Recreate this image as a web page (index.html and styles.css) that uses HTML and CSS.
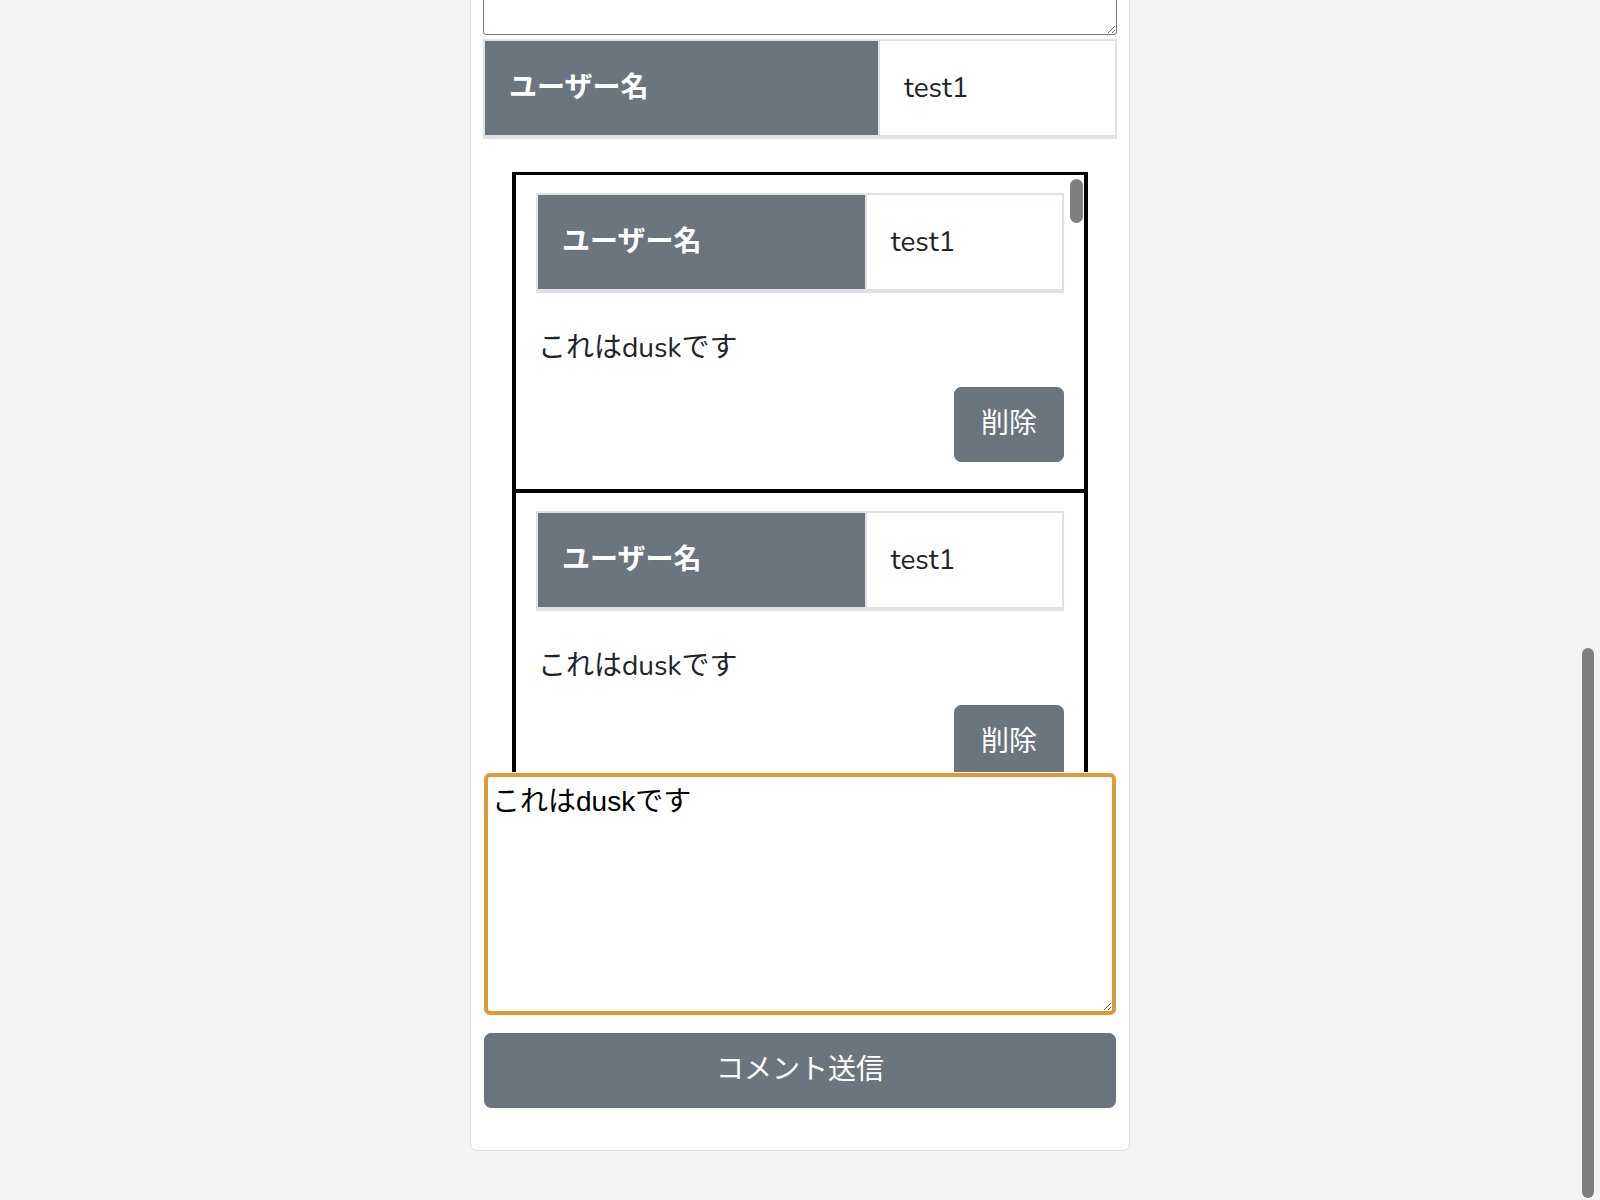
FILE: index.html
```html
<!DOCTYPE html>
<html lang="ja">
<head>
    <meta charset="UTF-8">
    <meta name="viewport" content="width=device-width, initial-scale=1.0">
    <title>投稿詳細</title>
    <link rel="stylesheet" href="styles.css">
</head>
<body>
    <div class="container">
        <div class="card">
            <div class="card-body">
                <h2 class="post-heading">投稿詳細</h2>
                <table class="info-table">
                    <tr><th>タイトル</th><td>テスト</td></tr>
                </table>
                <textarea class="post-body" readonly>これはテスト投稿です</textarea>
                <table class="info-table">
                    <tr><th>ユーザー名</th><td>test1</td></tr>
                </table>

                <div class="comment-box">
                    <div class="comment-list">
                        <div class="comment">
                            <table class="info-table">
                                <tr><th>ユーザー名</th><td>test1</td></tr>
                            </table>
                            <p class="comment-text">これはduskです</p>
                            <div class="comment-actions">
                                <button class="delete-btn">削除</button>
                            </div>
                        </div>
                        <div class="comment">
                            <table class="info-table">
                                <tr><th>ユーザー名</th><td>test1</td></tr>
                            </table>
                            <p class="comment-text">これはduskです</p>
                            <div class="comment-actions">
                                <button class="delete-btn">削除</button>
                            </div>
                        </div>
                        <div class="comment">
                            <table class="info-table">
                                <tr><th>ユーザー名</th><td>test1</td></tr>
                            </table>
                            <p class="comment-text">これはduskです</p>
                            <div class="comment-actions">
                                <button class="delete-btn">削除</button>
                            </div>
                        </div>
                    </div>
                    <div class="list-thumb"></div>
                </div>

                <form class="comment-form" id="commentForm">
                    <textarea class="comment-input" id="commentInput" name="comment">これはduskです</textarea>
                    <button type="submit" class="submit-btn">コメント送信</button>
                </form>
            </div>
        </div>
    </div>
    <div class="page-thumb"></div>

    <script src="script.js"></script>
</body>
</html>
```

FILE: styles.css
```css
html {
    scrollbar-width: none;
}
html::-webkit-scrollbar {
    display: none;
}
body {
    margin: 0;
    padding: 0;
    background-color: #f4f4f4;
    font-family: "Nunito", "Noto Sans", "Noto Sans CJK JP", sans-serif;
    font-size: 28px;
    line-height: 1.5;
    color: #212529;
}
.container {
    padding: 40px 0 49px;
}
.card {
    width: 660px;
    margin: 0 auto;
    box-sizing: border-box;
    background-color: #ffffff;
    border: 1px solid #dcdcdc;
    border-radius: 7px;
}
.card-body {
    padding: 24px 12px 42px;
}
.post-heading {
    margin: 0 0 24px;
    font-size: 40px;
    font-weight: 500;
}
.info-table {
    width: 100%;
    border-collapse: collapse;
    margin: 0;
}
.info-table th, .info-table td {
    border: 2px solid #dee2e6;
    border-bottom-width: 4px;
    padding: 26px 24px;
    line-height: 42px;
    text-align: left;
}
.info-table th {
    width: 62.5%;
    background-color: #6c757d;
    color: #ffffff;
    font-weight: bold;
}
.info-table td {
    background-color: #ffffff;
}
.post-body {
    display: block;
    width: 100%;
    height: 220px;
    box-sizing: border-box;
    margin: 24px 0 4px;
    border: 1px solid #767676;
    border-radius: 3px;
    font-size: 28px;
    font-family: "Liberation Sans", "Noto Sans CJK JP", sans-serif;
}
.comment-box {
    position: relative;
    width: 576px;
    height: 600px;
    box-sizing: border-box;
    margin: 33px auto 0;
    border: 4px solid #000000;
    border-top-width: 3px;
    border-bottom: none;
    overflow: hidden;
}
.comment {
    padding: 18px 20px 27px;
    border-bottom: 4px solid #000000;
}
.comment-text {
    margin: 34px 0 18px 2px;
    line-height: 42px;
}
.comment-actions {
    display: flex;
    justify-content: flex-end;
}
.delete-btn {
    background-color: #6c757d;
    color: #ffffff;
    border: 1px solid #6c757d;
    border-radius: 7px;
    padding: 15px 26px;
    font-family: inherit;
    font-size: 28px;
    line-height: 43px;
    cursor: pointer;
}
.list-thumb {
    position: absolute;
    top: 4px;
    right: 1px;
    width: 13px;
    height: 44px;
    border-radius: 7px;
    background-color: #7f7f7f;
}
.comment-form {
    margin: 1px 0 0;
}
.comment-input {
    display: block;
    width: 632px;
    height: 242px;
    box-sizing: border-box;
    margin: 0 1px;
    padding: 8px 4px;
    border: 4px solid #e09b38;
    border-radius: 6px;
    outline: none;
    font-family: "Liberation Sans", "Noto Sans CJK JP", sans-serif;
    font-size: 28px;
    line-height: 1.2;
    color: #000000;
    caret-color: #000000;
}
.submit-btn {
    display: block;
    width: 632px;
    margin: 18px 1px 0;
    padding: 15px 0;
    background-color: #6c757d;
    color: #ffffff;
    border: 1px solid #6c757d;
    border-radius: 7px;
    font-family: inherit;
    font-size: 28px;
    line-height: 43px;
    cursor: pointer;
}
.page-thumb {
    position: fixed;
    top: 648px;
    bottom: 2px;
    right: 6px;
    width: 12px;
    border-radius: 6px;
    background-color: #7f7f7f;
}
```

FILE: script.js
```js
const commentInput = document.getElementById('commentInput');
const commentForm = document.getElementById('commentForm');

// put the caret after the typed text, then show the bottom of the page
commentInput.focus();
commentInput.setSelectionRange(commentInput.value.length, commentInput.value.length);
window.scrollTo(0, document.documentElement.scrollHeight);

commentForm.addEventListener('submit', function(e) {
    e.preventDefault();
});

window.addEventListener('load', function() {
    window.scrollTo(0, document.documentElement.scrollHeight);
});
```
